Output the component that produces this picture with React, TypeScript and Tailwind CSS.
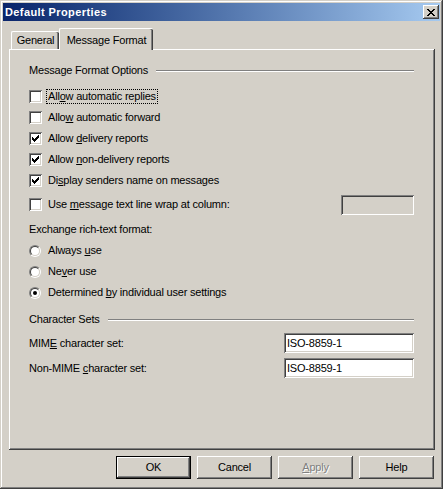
import React from 'react';

const raised =
  'shadow-[inset_-1px_-1px_#404040,inset_1px_1px_#ffffff,inset_-2px_-2px_#808080]';
const sunken =
  'shadow-[inset_1px_1px_#808080,inset_-1px_-1px_#ffffff,inset_2px_2px_#404040,inset_-2px_-2px_#d4d0c8]';

const Check = ({ checked }: { checked?: boolean }) => (
  <span className={`w-[13px] h-[13px] bg-white shrink-0 flex items-center justify-center ${sunken}`}>
    {checked && (
      <svg width="7" height="7" viewBox="0 0 7 7" shapeRendering="crispEdges">
        <path
          d="M6 0h1v1h-1z M5 1h2v1h-2z M0 2h1v1h-1z M4 2h3v1h-3z M0 3h2v1h-2z M3 3h3v1h-3z M0 4h5v1h-5z M1 5h3v1h-3z M2 6h1v1h-1z"
          fill="#000"
        />
      </svg>
    )}
  </span>
);

const Radio = ({ checked }: { checked?: boolean }) => (
  <span className="w-[12px] h-[12px] shrink-0 rounded-full border border-t-[#808080] border-l-[#808080] border-b-white border-r-white flex">
    <span className="flex-1 rounded-full bg-white border border-t-[#404040] border-l-[#404040] border-b-[#d4d0c8] border-r-[#d4d0c8] flex items-center justify-center">
      {checked && <span className="w-[4px] h-[4px] rounded-full bg-black" />}
    </span>
  </span>
);

const GroupHeader = ({ label }: { label: string }) => (
  <div className="h-[21px] flex items-center gap-[8px]">
    <span>{label}</span>
    <div className="flex-1 h-[2px] border-t border-t-[#808080] border-b border-b-white" />
  </div>
);

const CheckRow = ({
  checked,
  children,
  focus,
}: {
  checked?: boolean;
  children: React.ReactNode;
  focus?: boolean;
}) => (
  <div className="h-[21px] flex items-center gap-[6px]">
    <Check checked={checked} />
    <span className={focus ? 'outline-1 outline-dotted outline-black px-px -ml-px leading-[13px]' : ''}>
      {children}
    </span>
  </div>
);

const RadioRow = ({ checked, children }: { checked?: boolean; children: React.ReactNode }) => (
  <div className="h-[21px] flex items-center gap-[7px]">
    <Radio checked={checked} />
    <span>{children}</span>
  </div>
);

const Button = ({
  children,
  isDefault,
  disabled,
}: {
  children: React.ReactNode;
  isDefault?: boolean;
  disabled?: boolean;
}) => (
  <div
    className={`w-[75px] h-[23px] flex items-center justify-center ${
      isDefault ? 'border border-black' : ''
    }`}
  >
    <div
      className={`w-full h-full flex items-center justify-center ${raised} ${
        disabled ? 'text-[#808080] [text-shadow:1px_1px_#ffffff]' : 'text-black'
      }`}
    >
      {children}
    </div>
  </div>
);

export default function App() {
  return (
    <div
      className="w-[443px] h-[489px] bg-[#d4d0c8] p-[3px] flex flex-col text-[11px] tracking-[-0.2px] text-black shadow-[inset_-1px_-1px_#404040,inset_1px_1px_#d4d0c8,inset_-2px_-2px_#808080,inset_2px_2px_#ffffff]"
      style={{ fontFamily: '"Liberation Sans", Arial, sans-serif' }}
    >
      {/* title bar */}
      <div className="h-[18px] flex items-center justify-between pl-[2px] pr-[1px] bg-gradient-to-r from-[#0a246a] to-[#a6caf0]">
        <span className="text-white font-bold tracking-[0.4px]">Default Properties</span>
        <div className={`w-[16px] h-[14px] bg-[#d4d0c8] flex items-center justify-center ${raised}`}>
          <svg width="8" height="7" viewBox="0 0 8 7" shapeRendering="crispEdges">
            <path
              d="M0 0h2v1h-2z M6 0h2v1h-2z M1 1h2v1h-2z M5 1h2v1h-2z M2 2h4v1h-4z M3 3h2v1h-2z M2 4h4v1h-4z M1 5h2v1h-2z M5 5h2v1h-2z M0 6h2v1h-2z M6 6h2v1h-2z"
              fill="#000"
            />
          </svg>
        </div>
      </div>

      <div className="flex-1 flex flex-col pl-[6px] pr-[5px] pt-[7px]">
        {/* tabs */}
        <div className="h-[21px] flex items-end pl-[2px]">
          <div className="w-[48px] h-[18px] flex items-center justify-center rounded-t-[2px] border-t border-l border-white shadow-[inset_-1px_0_#404040,inset_-2px_0_#808080]">
            General
          </div>
          <div className="relative z-10 -mb-px w-[94px] h-[22px] bg-[#d4d0c8] flex items-start justify-center pt-[3px] rounded-t-[2px] border-t border-l border-white shadow-[inset_-1px_0_#404040,inset_-2px_0_#808080]">
            Message Format
          </div>
        </div>

        {/* panel */}
        <div className={`h-[401px] flex flex-col pt-[11px] pl-[20px] pr-[21px] ${raised}`}>
          <GroupHeader label="Message Format Options" />
          <div className="h-[5px]" />
          <CheckRow focus>
            All<u>o</u>w automatic replies
          </CheckRow>
          <CheckRow>
            Allo<u>w</u> automatic forward
          </CheckRow>
          <CheckRow checked>
            Allow <u>d</u>elivery reports
          </CheckRow>
          <CheckRow checked>
            Allow <u>n</u>on-delivery reports
          </CheckRow>
          <CheckRow checked>
            Di<u>s</u>play senders name on messages
          </CheckRow>
          <div className="h-[21px] mt-[3px] flex items-center">
            <div className="flex items-center gap-[6px] flex-1">
              <Check />
              <span>
                Use <u>m</u>essage text line wrap at column:
              </span>
            </div>
            <div className={`w-[73px] h-[20px] bg-[#d4d0c8] ${sunken}`} />
          </div>
          <div className="h-[21px] mt-[4px] flex items-center">Exchange rich-text format:</div>
          <RadioRow>
            Always <u>u</u>se
          </RadioRow>
          <RadioRow>
            Ne<u>v</u>er use
          </RadioRow>
          <RadioRow checked>
            Determined <u>b</u>y individual user settings
          </RadioRow>

          <div className="h-[6px]" />
          <GroupHeader label="Character Sets" />
          <div className="h-[20px] mt-[3px] flex items-center justify-between">
            <span>
              MIM<u>E</u> character set:
            </span>
            <div className={`w-[130px] h-[20px] bg-white flex items-center pl-[3px] ${sunken}`}>ISO-8859-1</div>
          </div>
          <div className="h-[20px] mt-[5px] flex items-center justify-between">
            <span>
              Non-MIME <u>c</u>haracter set:
            </span>
            <div className={`w-[130px] h-[20px] bg-white flex items-center pl-[3px] ${sunken}`}>ISO-8859-1</div>
          </div>
        </div>

        {/* buttons */}
        <div className="mt-[6px] flex justify-end gap-[6px] pr-[1px]">
          <Button isDefault>OK</Button>
          <Button>Cancel</Button>
          <Button disabled>
            <u>A</u>pply
          </Button>
          <Button>Help</Button>
        </div>
      </div>
    </div>
  );
}
